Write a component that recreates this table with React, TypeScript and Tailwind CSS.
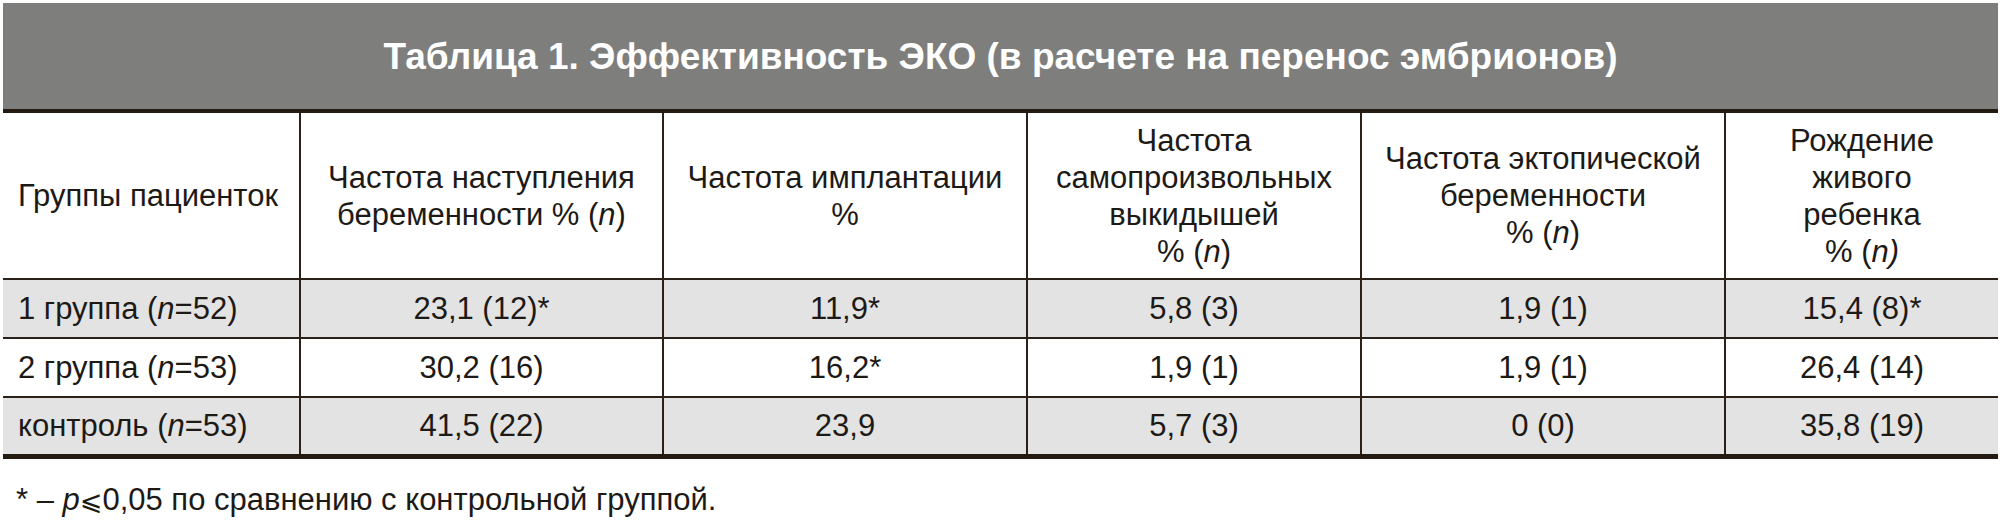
import React from "react";

const cols = [297, 363, 364, 334, 364, 273];

const rows = [
  { group: "1 группа", n: "52", values: ["23,1 (12)*", "11,9*", "5,8 (3)", "1,9 (1)", "15,4 (8)*"], shaded: true },
  { group: "2 группа", n: "53", values: ["30,2 (16)", "16,2*", "1,9 (1)", "1,9 (1)", "26,4 (14)"], shaded: false },
  { group: "контроль", n: "53", values: ["41,5 (22)", "23,9", "5,7 (3)", "0 (0)", "35,8 (19)"], shaded: true },
];

function PctN({ closeItalic = false }: { closeItalic?: boolean }) {
  return (
    <>
      % (<i>n</i>
      {closeItalic ? <i>)</i> : ")"}
    </>
  );
}

export default function App() {
  return (
    <div
      className="w-[2000px] h-[528px] bg-white text-[#1d1a16] pt-[3px] pl-[3px] pr-[2px]"
      style={{ fontFamily: '"Liberation Sans", Arial, "DejaVu Sans", sans-serif' }}
    >
      {/* Title */}
      <div className="h-[106px] bg-[#7e7e7c] flex items-center justify-center border-b-[4px] border-[#231a12] box-content">
        <h1 className="text-[37px] font-bold text-white leading-none">
          Таблица 1. Эффективность ЭКО (в расчете на перенос эмбрионов)
        </h1>
      </div>

      <table className="w-full table-fixed border-collapse text-[31px] leading-[37px]">
        <colgroup>
          {cols.map((w, i) => (
            <col key={i} style={{ width: w }} />
          ))}
        </colgroup>
        <thead>
          <tr className="h-[166px] border-b-2 border-[#2b2118]">
            <th className="font-normal text-left px-[15px] align-middle">Группы пациенток</th>
            <th className="font-normal border-l-2 border-[#2b2118] align-middle">
              Частота наступления
              <br />
              беременности <PctN />
            </th>
            <th className="font-normal border-l-2 border-[#2b2118] align-middle">
              Частота имплантации
              <br />%
            </th>
            <th className="font-normal border-l-2 border-[#2b2118] align-middle">
              Частота
              <br />
              самопроизвольных
              <br />
              выкидышей
              <br />
              <PctN />
            </th>
            <th className="font-normal border-l-2 border-[#2b2118] align-middle">
              Частота эктопической
              <br />
              беременности
              <br />
              <PctN />
            </th>
            <th className="font-normal border-l-2 border-[#2b2118] align-middle">
              Рождение
              <br />
              живого
              <br />
              ребенка
              <br />
              <PctN closeItalic />
            </th>
          </tr>
        </thead>
        <tbody>
          {rows.map((r, i) => (
            <tr
              key={i}
              className={`h-[59px] ${r.shaded ? "bg-[#e3e3e3]" : "bg-white"} ${
                i === rows.length - 1 ? "border-b-[5px] border-[#231a12]" : "border-b-2 border-[#2b2118]"
              }`}
            >
              <td className="px-[15px] text-left align-middle">
                {r.group} (<i>n</i>={r.n})
              </td>
              {r.values.map((v, j) => (
                <td key={j} className="text-center align-middle border-l-2 border-[#2b2118]">
                  {v}
                </td>
              ))}
            </tr>
          ))}
        </tbody>
      </table>

      <p className="mt-[22px] pl-[13px] text-[31px] leading-[37px]">
        * – <i>p</i>
        <span style={{ fontFamily: '"DejaVu Sans", sans-serif' }} className="text-[27px]">⩽</span>0,05 по сравнению с
        контрольной группой.
      </p>
    </div>
  );
}
